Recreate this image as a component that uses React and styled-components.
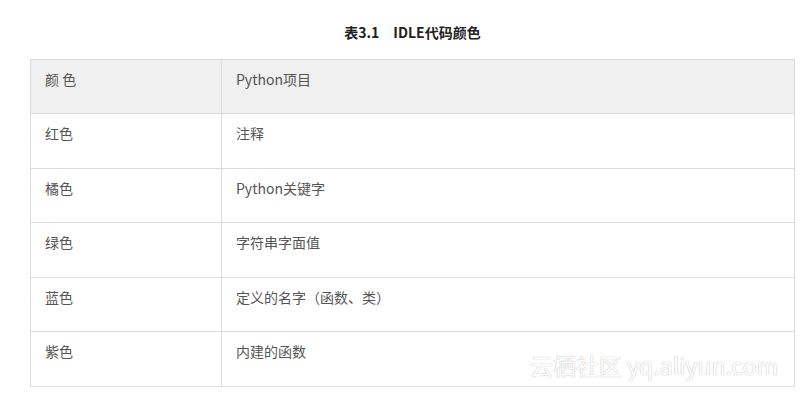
import React from "react";
import styled, { createGlobalStyle } from "styled-components";

const Global = createGlobalStyle`
  html, body { margin: 0; padding: 0; background: #fff; }
  body { font-family: "Noto Sans", "Noto Sans CJK SC", sans-serif; }
`;

const Page = styled.div`
  position: relative;
  width: 808px;
  height: 393px;
  padding: 22px 13px 0 30px;
  box-sizing: border-box;
  overflow: hidden;
`;

const Caption = styled.div`
  width: 765px;
  text-align: center;
  font-family: "Noto Sans CJK SC", sans-serif;
  font-weight: 700;
  font-size: 14px;
  line-height: 20px;
  color: #222;
  margin-bottom: 17px;
  white-space: pre;
`;

const Table = styled.table`
  width: 765px;
  border-collapse: collapse;
  table-layout: fixed;
  font-family: "Noto Sans CJK SC", sans-serif;
  font-size: 14px;
  color: #555;
`;

const Row = styled.tr`
  height: ${(p) => p.$h}px;
  background: ${(p) => (p.$head ? "#f0f0f0" : "#fff")};
`;

const Cell = styled.td`
  border: 1px solid #dcdcdc;
  padding: 9px 14px 0;
  vertical-align: top;
  line-height: 20px;
  width: ${(p) => (p.$first ? "162px" : "auto")};
`;

const Watermark = styled.div`
  position: absolute;
  left: 530px;
  top: 350px;
  font-family: "Noto Sans CJK SC", sans-serif;
  font-size: 23px;
  line-height: 30px;
  color: #fff;
  text-shadow: 0 0 1px #b8b8b8, 0 0 1px #c8c8c8;
  white-space: nowrap;
`;

const rows = [
  ["红色", "注释"],
  ["橘色", "Python关键字"],
  ["绿色", "字符串字面值"],
  ["蓝色", "定义的名字（函数、类）"],
  ["紫色", "内建的函数"],
];

const heights = [55, 54, 55, 54, 55];

export default function App() {
  return (
    <>
      <Global />
      <Page>
        <Caption>{"表3.1　IDLE代码颜色"}</Caption>
        <Table>
          <tbody>
            <Row $head $h={54}>
              <Cell $first>颜 色</Cell>
              <Cell>Python项目</Cell>
            </Row>
            {rows.map((r, i) => (
              <Row key={i} $h={heights[i]}>
                <Cell $first>{r[0]}</Cell>
                <Cell>{r[1]}</Cell>
              </Row>
            ))}
          </tbody>
        </Table>
        <Watermark>云栖社区 yq.aliyun.com</Watermark>
      </Page>
    </>
  );
}
